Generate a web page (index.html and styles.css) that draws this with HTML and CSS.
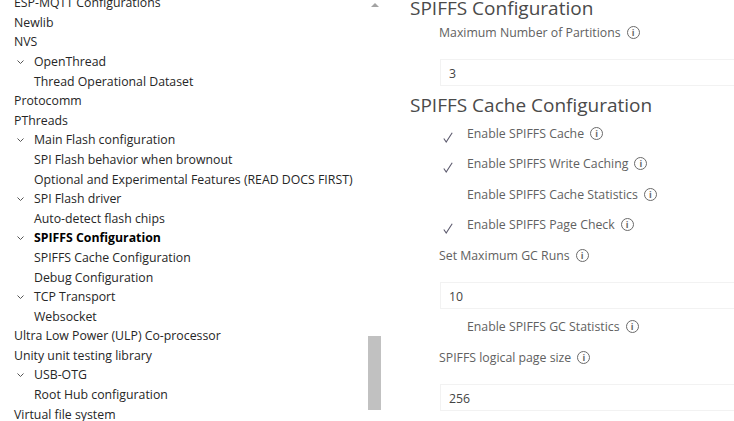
FILE: index.html
```html
<html><head>
<meta charset="utf-8">
<title>SDK Configuration Editor</title>
<link rel="stylesheet" href="styles.css">
</head>
<body>
<div class="page">

<div class="tree">
  <div class="row top">ESP-MQTT Configurations</div>
  <div class="row top">Newlib</div>
  <div class="row top">NVS</div>
  <div class="row parent"><svg class="chev" width="7" height="4" viewBox="0 0 7 4"><polyline points="0.5,0.5 3.5,3.5 6.5,0.5"/></svg>OpenThread</div>
  <div class="row child">Thread Operational Dataset</div>
  <div class="row top">Protocomm</div>
  <div class="row top">PThreads</div>
  <div class="row parent"><svg class="chev" width="7" height="4" viewBox="0 0 7 4"><polyline points="0.5,0.5 3.5,3.5 6.5,0.5"/></svg>Main Flash configuration</div>
  <div class="row child">SPI Flash behavior when brownout</div>
  <div class="row child">Optional and Experimental Features (READ DOCS FIRST)</div>
  <div class="row parent"><svg class="chev" width="7" height="4" viewBox="0 0 7 4"><polyline points="0.5,0.5 3.5,3.5 6.5,0.5"/></svg>SPI Flash driver</div>
  <div class="row child">Auto-detect flash chips</div>
  <div class="row parent selected"><svg class="chev" width="7" height="4" viewBox="0 0 7 4"><polyline points="0.5,0.5 3.5,3.5 6.5,0.5"/></svg>SPIFFS Configuration</div>
  <div class="row child">SPIFFS Cache Configuration</div>
  <div class="row child">Debug Configuration</div>
  <div class="row parent"><svg class="chev" width="7" height="4" viewBox="0 0 7 4"><polyline points="0.5,0.5 3.5,3.5 6.5,0.5"/></svg>TCP Transport</div>
  <div class="row child">Websocket</div>
  <div class="row top">Ultra Low Power (ULP) Co-processor</div>
  <div class="row top">Unity unit testing library</div>
  <div class="row parent"><svg class="chev" width="7" height="4" viewBox="0 0 7 4"><polyline points="0.5,0.5 3.5,3.5 6.5,0.5"/></svg>USB-OTG</div>
  <div class="row child">Root Hub configuration</div>
  <div class="row top">Virtual file system</div>
</div>

<div class="scrollbar">
  <div class="arrow"></div>
  <div class="thumb"></div>
</div>

<div class="content">
  <h2 class="section first">SPIFFS Configuration</h2>
  <div class="label">Maximum Number of Partitions <span class="info">i</span></div>
  <div class="field">3</div>

  <h2 class="section">SPIFFS Cache Configuration</h2>
  <div class="check"><svg class="tick" width="10" height="11" viewBox="0 0 10 11"><polyline points="0.8,6.5 3.2,10 9.2,0.8"/></svg><span class="ctext">Enable SPIFFS Cache <span class="info">i</span></span></div>
  <div class="check"><svg class="tick" width="10" height="11" viewBox="0 0 10 11"><polyline points="0.8,6.5 3.2,10 9.2,0.8"/></svg><span class="ctext">Enable SPIFFS Write Caching <span class="info">i</span></span></div>
  <div class="check"><span class="ctext">Enable SPIFFS Cache Statistics <span class="info">i</span></span></div>
  <div class="check"><svg class="tick" width="10" height="11" viewBox="0 0 10 11"><polyline points="0.8,6.5 3.2,10 9.2,0.8"/></svg><span class="ctext">Enable SPIFFS Page Check <span class="info">i</span></span></div>
  <div class="label">Set Maximum GC Runs <span class="info">i</span></div>
  <div class="field">10</div>
  <div class="check"><span class="ctext">Enable SPIFFS GC Statistics <span class="info">i</span></span></div>
  <div class="label">SPIFFS logical page size <span class="info">i</span></div>
  <div class="field">256</div>
</div>

</div>
</body></html>
```

FILE: styles.css
```css
body {margin: 0; background-color: white; font-family: "Open Sans", "Noto Sans", sans-serif; font-size: 12.3px; overflow: hidden;}

.page {display: flex; height: 421px; overflow: hidden;}

/* left tree */
.tree {width: 366px; flex: none; margin-top: -6.8px; color: #262626;}
.row {height: 19.6px; line-height: 19.6px; white-space: nowrap; display: flex; align-items: center;}
.row.top {padding-left: 14px;}
.row.parent {padding-left: 17px;}
.row.child {padding-left: 34px;}
.row.selected {font-weight: bold; color: #000;}
.chev {flex: none; margin-right: 10px; fill: none; stroke: #555; stroke-width: 1;}

/* scrollbar */
.scrollbar {width: 17px; flex: none; position: relative;}
.arrow {margin: 3px 0 0 5px; width: 0; height: 0; border-left: 4px solid transparent; border-right: 4px solid transparent; border-bottom: 4px solid #a3a3a3;}
.thumb {position: absolute; left: 2px; top: 336px; width: 13px; height: 74px; background: #c1c1c1;}

/* right content */
.content {flex: 1; padding-left: 27px; color: #616161; min-width: 0;}
.section {margin: 0; font-weight: normal; font-size: 19px; color: #4a4a4a; height: 29.5px; padding-top: 4.5px; line-height: 25px; white-space: nowrap; box-sizing: border-box;}
.section.first {margin-top: -6px; height: 23px; padding-top: 0; line-height: 29px;}
.label {height: 30.5px; padding-left: 29px; white-space: nowrap; display: flex; align-items: center;}
.field {margin: 11.5px 0 2.5px 30px; height: 27px; line-height: 27px; box-sizing: border-box; border: 1px solid #f2f2f2; border-right: none; padding-left: 8px; color: #444;}
.check {height: 30.5px; display: flex; align-items: center; padding-left: 33px; white-space: nowrap;}
.tick {flex: none; fill: none; stroke: #5d5b6e; stroke-width: 1.1; margin-top: 8px;}
.ctext {display: flex; align-items: center; margin-left: 24px;}
.tick + .ctext {margin-left: 14px;}
.info {display: inline-flex; align-items: center; justify-content: center; width: 11px; height: 11px; border: 1px solid #6a6a6a; border-radius: 50%; font-size: 9px; font-weight: bold; line-height: 1; margin-left: 6px; color: #6a6a6a;}
```
